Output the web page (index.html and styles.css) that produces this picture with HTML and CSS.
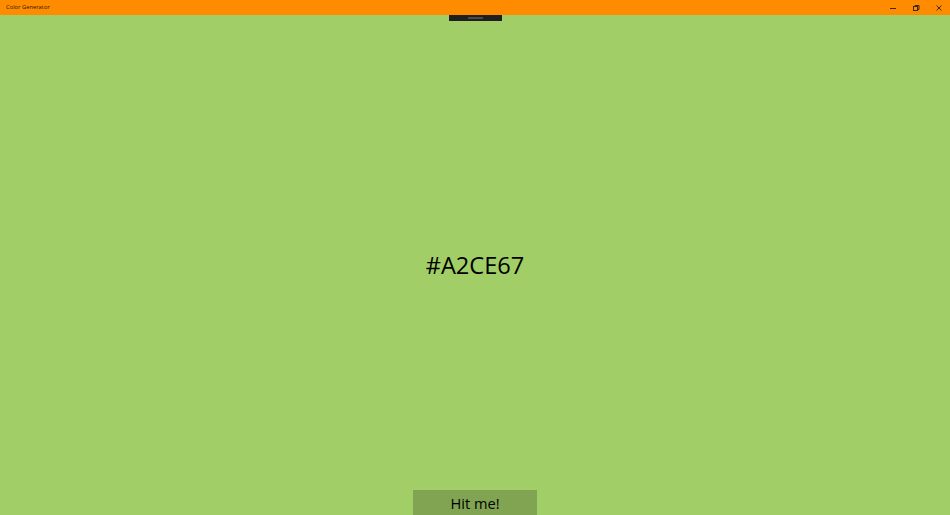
FILE: index.html
```html
<!DOCTYPE html>
<html>
<head>
<meta charset="utf-8">
<link rel="stylesheet" href="styles.css">
</head>
<body>
<div class="window">
  <header class="titlebar">
    <span class="title">Color Generator</span>
    <div class="caption">
      <span class="cap-btn">
        <svg width="8" height="8" viewBox="0 0 8 8"><path d="M1 4.5h6" stroke="#3a2a10" stroke-width="1"/></svg>
      </span>
      <span class="cap-btn">
        <svg width="8" height="8" viewBox="0 0 8 8"><rect x="1.5" y="2.5" width="4" height="4" fill="none" stroke="#3a2a10" stroke-width="1"/><path d="M3 2.5V1.5h4v4H5.5" fill="none" stroke="#3a2a10" stroke-width="1"/></svg>
      </span>
      <span class="cap-btn">
        <svg width="8" height="8" viewBox="0 0 8 8"><path d="M1.5 1.5l5 5M6.5 1.5l-5 5" stroke="#3a2a10" stroke-width="1"/></svg>
      </span>
    </div>
  </header>
  <main class="content">
    <div class="debugbar"><span class="grip"></span></div>
    <div class="hex">#A2CE67</div>
    <button class="hit">Hit me!</button>
  </main>
</div>
</body>
</html>
```
FILE: styles.css
```css
html, body {
  margin: 0;
  padding: 0;
  width: 950px;
  height: 515px;
  overflow: hidden;
}
.window {
  display: flex;
  flex-direction: column;
  width: 950px;
  height: 515px;
  font-family: "Open Sans", "Noto Sans", sans-serif;
}
.titlebar {
  height: 15px;
  flex: none;
  background: #ff8c00;
  display: flex;
  align-items: center;
  justify-content: space-between;
}
.title {
  font-size: 5.8px;
  color: #2a1a00;
  padding-left: 6px;
  line-height: 15px;
}
.caption {
  display: flex;
  height: 15px;
}
.cap-btn {
  width: 23px;
  height: 15px;
  display: flex;
  align-items: center;
  justify-content: center;
}
.content {
  flex: 1;
  position: relative;
  background: #a2ce67;
  display: grid;
  grid-template: 1fr / 1fr;
  justify-items: center;
}
.hex {
  grid-area: 1 / 1;
  align-self: center;
  font-size: 23.6px;
  color: #000;
  line-height: 30px;
}
.hit {
  grid-area: 1 / 1;
  align-self: end;
  width: 124px;
  height: 25px;
  border: none;
  margin: 0;
  padding: 0;
  background: rgba(0, 0, 0, 0.2);
  font-family: "Open Sans", "Noto Sans", sans-serif;
  font-size: 14.6px;
  color: #000;
  line-height: 26px;
}
.debugbar {
  position: absolute;
  top: 0;
  left: 449px;
  width: 53px;
  height: 6px;
  background: #1f1f1f;
  display: flex;
  align-items: center;
  justify-content: center;
}
.grip {
  width: 15px;
  height: 2px;
  background: #4a4a4a;
}
```
